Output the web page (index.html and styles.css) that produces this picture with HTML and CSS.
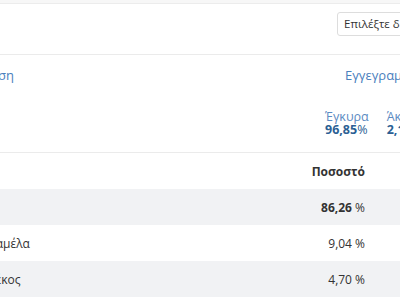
FILE: index.html
```html
<!DOCTYPE html>
<html lang="el">
<head>
<meta charset="utf-8">
<link rel="stylesheet" href="styles.css">
</head>
<body>
<div class="topband"></div>
<div class="page">
  <div class="header">
    <div class="select">Επιλέξτε δημοτική ενότητα</div>
  </div>
  <div class="info">
    <div class="info-row">
      <div class="info-left"><a class="link">Υπό καταμέτρηση</a></div>
      <div class="info-right"><a class="link">Εγγεγραμμένοι 12.345</a></div>
    </div>
    <div class="stats">
      <div class="stat"><div class="stat-label">Έγκυρα</div><div class="stat-value"><b>96,85</b>%</div></div>
      <div class="stat"><div class="stat-label">Άκυρα</div><div class="stat-value"><b>2,10</b>%</div></div>
      <div class="stat"><div class="stat-label">Λευκά</div><div class="stat-value"><b>1,05</b>%</div></div>
    </div>
  </div>
  <div class="table">
    <div class="row head"><div class="name">Υποψήφιος</div><div class="pct">Ποσοστό</div><div class="votes">Ψήφοι</div></div>
    <div class="row alt"><div class="name">Νίκος Παππάς</div><div class="pct"><b>86,26</b> %</div><div class="votes">5.210</div></div>
    <div class="row"><div class="name">Παρασκευή Καραμέλα</div><div class="pct">9,04 %</div><div class="votes">546</div></div>
    <div class="row alt"><div class="name">Κωνσταντίνος Ρέκος</div><div class="pct">4,70 %</div><div class="votes">284</div></div>
  </div>
</div>
</body>
</html>
```
FILE: styles.css
```css
html, body {
  margin: 0;
  padding: 0;
  background: #ffffff;
  overflow: hidden;
}
body {
  font-family: "Open Sans", "Noto Sans", sans-serif;
  color: #333333;
  font-size: 12px;
}
.topband {
  height: 3px;
  background: #f7f7f7;
  border-bottom: 1px solid #ececec;
}
.page {
  margin-left: -94px;
  width: 594px;
}
.header {
  height: 51px;
  box-sizing: border-box;
  border-bottom: 1px solid #ebebeb;
  display: flex;
  align-items: flex-start;
  padding-top: 8px;
  padding-left: 431px;
}
.select {
  height: 24px;
  box-sizing: border-box;
  border: 1px solid #dddddd;
  border-radius: 3px;
  padding: 0 6px;
  font-size: 11.5px;
  line-height: 22px;
  white-space: nowrap;
  color: #333;
}
.info {
  height: 98px;
  box-sizing: border-box;
  border-bottom: 1px solid #ebebeb;
  padding-top: 10px;
}
.info-row {
  display: flex;
  font-size: 13px;
  line-height: 20px;
}
.info-left {
  width: 439px;
}
.link {
  color: #4a80bd;
}
.info-right {
  white-space: nowrap;
}
.stats {
  display: flex;
  margin-top: 25px;
  padding-left: 419px;
  gap: 18px;
  font-size: 12.5px;
  line-height: 13px;
}
.stat-label {
  color: #5b8ac2;
}
.stat-value {
  color: #2b5f94;
}
.stat-value b {
  font-weight: 700;
}
.table {
  display: flex;
  flex-direction: column;
}
.row {
  display: grid;
  grid-template-columns: 1fr 120px 125px;
  height: 36px;
  line-height: 37px;
  font-size: 12px;
}
.row.head {
  font-weight: 700;
}
.row.alt {
  background: #f1f2f4;
}
.name {
  white-space: nowrap;
  overflow: hidden;
}
.pct {
  text-align: right;
  padding-right: 10px;
}
.pct b {
  font-weight: 700;
}
.votes {
  text-align: right;
  padding-right: 10px;
}
```
